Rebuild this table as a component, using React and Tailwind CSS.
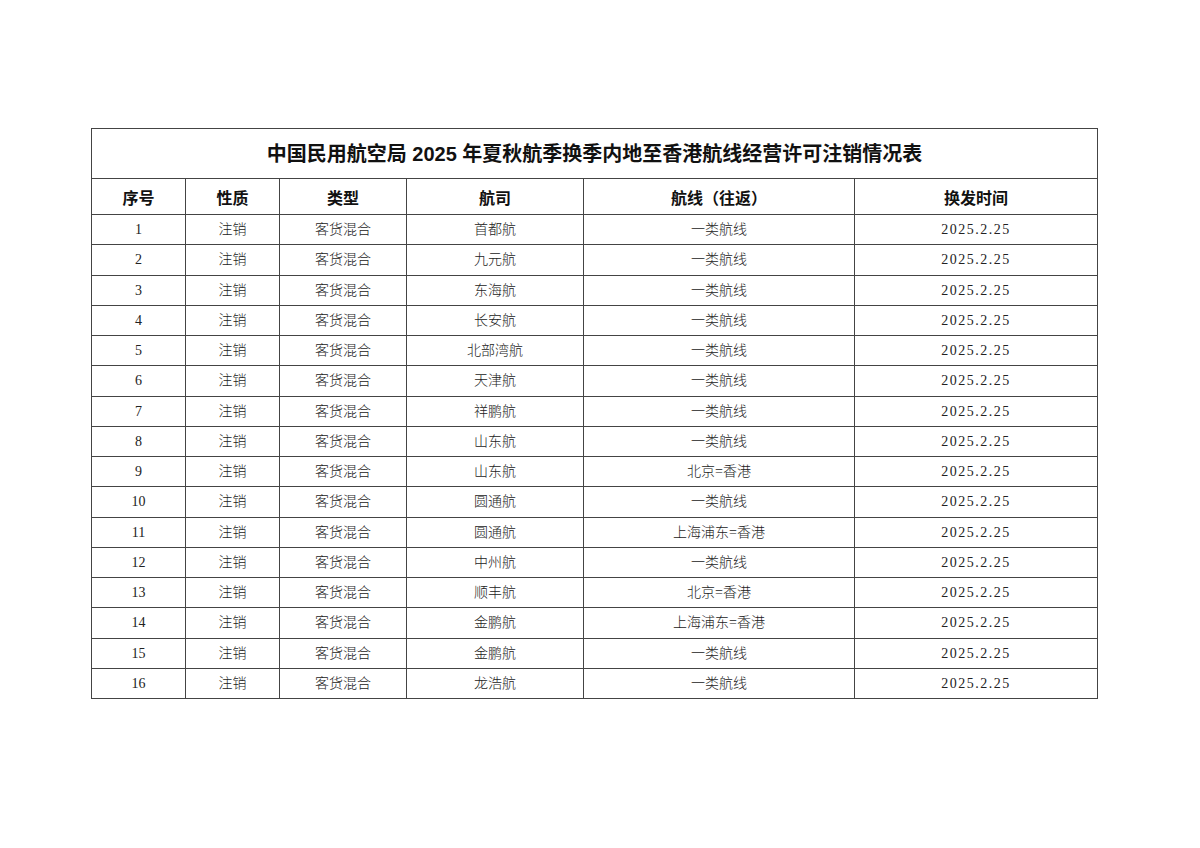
import React from 'react';

const rows = [
    ['1', '首都航', '一类航线'],
    ['2', '九元航', '一类航线'],
    ['3', '东海航', '一类航线'],
    ['4', '长安航', '一类航线'],
    ['5', '北部湾航', '一类航线'],
    ['6', '天津航', '一类航线'],
    ['7', '祥鹏航', '一类航线'],
    ['8', '山东航', '一类航线'],
    ['9', '山东航', '北京=香港'],
    ['10', '圆通航', '一类航线'],
    ['11', '圆通航', '上海浦东=香港'],
    ['12', '中州航', '一类航线'],
    ['13', '顺丰航', '北京=香港'],
    ['14', '金鹏航', '上海浦东=香港'],
    ['15', '金鹏航', '一类航线'],
    ['16', '龙浩航', '一类航线'],
];

const headers = ['序号', '性质', '类型', '航司', '航线（往返）', '换发时间'];

const App = () => {
    return (
        <div className="min-h-[848px] w-[1200px] bg-white pt-[128px] pl-[91px]">
            <table className="table-fixed border-collapse w-[1006px] border border-[#444]">
                <colgroup>
                    <col className="w-[94px]" />
                    <col className="w-[94px]" />
                    <col className="w-[127px]" />
                    <col className="w-[177px]" />
                    <col className="w-[271px]" />
                    <col className="w-[243px]" />
                </colgroup>
                <thead>
                    <tr className="h-[50px]">
                        <th
                            colSpan={6}
                            className="border border-[#444] p-0 text-center text-[20px] font-bold text-[#111] [font-family:'Liberation_Sans','Noto_Sans_CJK_SC',sans-serif]"
                        >
                            中国民用航空局 2025 年夏秋航季换季内地至香港航线经营许可注销情况表
                        </th>
                    </tr>
                    <tr className="h-[36px]">
                        {headers.map((h) => (
                            <th
                                key={h}
                                className="border border-[#444] p-0 text-center text-[16px] font-bold text-[#111] [font-family:'Noto_Sans_CJK_SC',sans-serif]"
                            >
                                {h}
                            </th>
                        ))}
                    </tr>
                </thead>
                <tbody className="text-[14px] text-[#222] font-light [font-family:'Liberation_Serif','Noto_Sans_CJK_SC',serif]">
                    {rows.map(([no, airline, route]) => (
                        <tr key={no} className="h-[30.25px]">
                            <td className="border border-[#444] p-0 text-center">{no}</td>
                            <td className="border border-[#444] p-0 text-center">注销</td>
                            <td className="border border-[#444] p-0 text-center">客货混合</td>
                            <td className="border border-[#444] p-0 text-center">{airline}</td>
                            <td className="border border-[#444] p-0 text-center">{route}</td>
                            <td className="border border-[#444] p-0 text-center tracking-[1.5px]">2025.2.25</td>
                        </tr>
                    ))}
                </tbody>
            </table>
        </div>
    );
};

export default App;
